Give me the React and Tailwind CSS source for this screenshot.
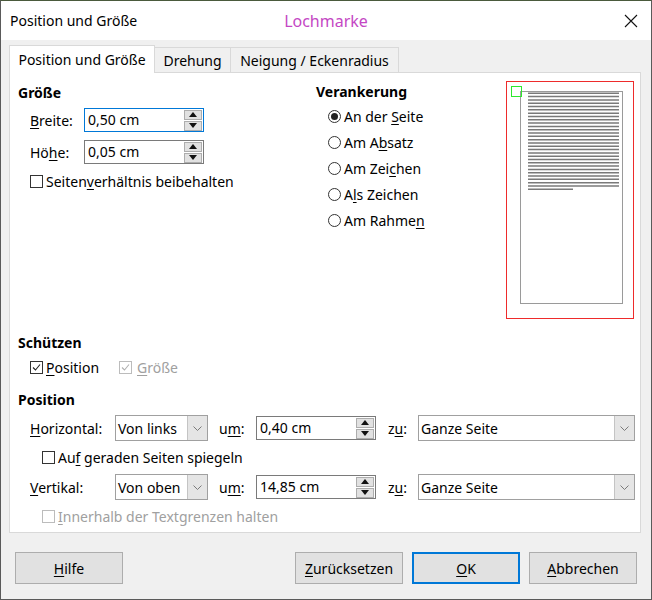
import React from "react";

const U = ({ children }) => <span className="underline underline-offset-2">{children}</span>;

const Checkbox = ({ checked, disabled }) => (
    <span className={`inline-flex w-[13px] h-[13px] border items-center justify-center bg-white ${disabled ? "border-[#bcbcbc]" : "border-[#333]"}`}>
        {checked && (
            <svg width="11" height="11" viewBox="0 0 11 11">
                <path d="M2 5.5 L4.5 8 L9 2.5" fill="none" stroke={disabled ? "#b0b0b0" : "#222"} strokeWidth="1.1" />
            </svg>
        )}
    </span>
);

const Radio = ({ checked }) => (
    <span className="inline-flex w-[13px] h-[13px] rounded-full border border-[#333] items-center justify-center bg-white">
        {checked && <span className="w-[7px] h-[7px] rounded-full bg-[#222]"></span>}
    </span>
);

const SpinField = ({ value, width, focused }) => (
    <div className={`flex items-center bg-white border h-[24px] ${width} ${focused ? "border-[#0078d7]" : "border-[#7a7a7a]"}`}>
        <span className="flex-1 pl-[3px] leading-none">{value}</span>
        <div className="flex flex-col gap-[1px] mr-[1px]">
            <span className="w-[18px] h-[10px] bg-[#e1e1e1] border border-[#adadad] flex items-center justify-center">
                <svg width="8" height="5" viewBox="0 0 8 5"><path d="M0 5 L4 0 L8 5 Z" fill="#111" /></svg>
            </span>
            <span className="w-[18px] h-[10px] bg-[#e1e1e1] border border-[#adadad] flex items-center justify-center">
                <svg width="8" height="5" viewBox="0 0 8 5"><path d="M0 0 L4 5 L8 0 Z" fill="#111" /></svg>
            </span>
        </div>
    </div>
);

const Select = ({ value, width }) => (
    <div className={`flex items-stretch bg-white border border-[#a0a0a0] h-[26px] ${width}`}>
        <span className="flex-1 pl-[2px] flex items-center">{value}</span>
        <span className="w-[20px] bg-[#e5e5e5] border-l border-[#c4c4c4] flex items-center justify-center">
            <svg width="9" height="5" viewBox="0 0 9 5"><path d="M0.5 0.5 L4.5 4.5 L8.5 0.5" fill="none" stroke="#7a7a7a" strokeWidth="1" /></svg>
        </span>
    </div>
);

const Preview = () => {
    const lines = Array.from({ length: 29 }, (_, i) => 12.3 + i * 3.31);
    return (
        <svg width="128" height="238" viewBox="0 0 128 238">
            <rect x="0.5" y="0.5" width="127" height="237" fill="white" stroke="#ee2b2b" strokeWidth="1" />
            <rect x="14.5" y="10.5" width="102" height="212" fill="white" stroke="#9a9a9a" strokeWidth="1" />
            {lines.map((y) => (
                <line key={y} x1="22" x2="113" y1={y} y2={y} stroke="#7a7a7a" strokeWidth="1.5" />
            ))}
            <line x1="22" x2="67" y1={108.3} y2={108.3} stroke="#7a7a7a" strokeWidth="1.5" />
            <rect x="5.5" y="5.5" width="10" height="10" fill="none" stroke="#2ee82e" strokeWidth="1" />
        </svg>
    );
};

const Button = ({ children, primary, width = "w-[108px]" }) => (
    <button className={`h-[32px] ${width} bg-[#e1e1e1] flex items-center justify-center ${primary ? "border-2 border-[#0078d7]" : "border border-[#adadad]"}`}>
        {children}
    </button>
);

export default function App() {
    return (
        <div className="w-[652px] h-[600px] flex flex-col bg-[#f0f0f0] border border-[#5a5a5a] border-t-[#4a5a3c] text-[14px] text-black overflow-hidden" style={{ fontFamily: '"Segoe UI", "Noto Sans", sans-serif' }}>
            {/* title bar */}
            <div className="h-[39px] bg-white grid grid-cols-[1fr_auto_1fr] items-center px-[9px] shrink-0">
                <span className="text-[14px]">Position und Größe</span>
                <span className="text-[16px] text-[#c447c4]">Lochmarke</span>
                <span className="justify-self-end mr-[4px]">
                    <svg width="14" height="14" viewBox="0 0 14 14"><path d="M1 1 L13 13 M13 1 L1 13" stroke="#111" strokeWidth="1.1" /></svg>
                </span>
            </div>

            <div className="px-[8px] pt-[5px] flex flex-col">
                {/* tabs */}
                <div className="flex items-end h-[28px] relative z-10">
                    <div className="h-[28px] w-[146px] bg-white border border-[#d9d9d9] border-b-0 flex items-center justify-center">Position und Größe</div>
                    <div className="h-[26px] w-[76px] border border-[#d9d9d9] border-l-0 flex items-center justify-center">Drehung</div>
                    <div className="h-[26px] w-[168px] border border-[#d9d9d9] border-l-0 flex items-center justify-center">Neigung / Eckenradius</div>
                </div>

                {/* panel */}
                <div className="w-[632px] h-[461px] -mt-[1px] bg-white border border-[#d9d9d9] flex flex-col">
                    <div className="flex h-[246px]">
                        <div className="w-[306px] pl-[8px] pt-[9px] flex flex-col">
                            <div className="h-[20px] flex items-center font-bold">Größe</div>
                            <div className="mt-[6px] flex items-center pl-[12px]">
                                <span className="w-[54px]"><U>B</U>reite:</span>
                                <SpinField value="0,50 cm" width="w-[120px]" focused />
                            </div>
                            <div className="mt-[8px] flex items-center pl-[12px]">
                                <span className="w-[54px]">Hö<U>h</U>e:</span>
                                <SpinField value="0,05 cm" width="w-[120px]" />
                            </div>
                            <div className="mt-[7px] h-[20px] flex items-center gap-[3px] pl-[12px]">
                                <Checkbox />
                                <span>Seiten<U>v</U>erhältnis beibehalten</span>
                            </div>
                        </div>
                        <div className="w-[190px] pt-[8px] flex flex-col">
                            <div className="h-[20px] flex items-center font-bold">Verankerung</div>
                            <div className="flex flex-col gap-[6px] pl-[12px] mt-[5px]">
                                <div className="h-[20px] flex items-center gap-[3px]"><Radio checked /><span>An der <U>S</U>eite</span></div>
                                <div className="h-[20px] flex items-center gap-[3px]"><Radio /><span>Am A<U>b</U>satz</span></div>
                                <div className="h-[20px] flex items-center gap-[3px]"><Radio /><span>Am Zei<U>c</U>hen</span></div>
                                <div className="h-[20px] flex items-center gap-[3px]"><Radio /><span>A<U>l</U>s Zeichen</span></div>
                                <div className="h-[20px] flex items-center gap-[3px]"><Radio /><span>Am Rahme<U>n</U></span></div>
                            </div>
                        </div>
                        <div className="pt-[8px] ml-auto mr-[6px]">
                            <Preview />
                        </div>
                    </div>

                    <div className="pl-[8px] pt-[13px] flex flex-col">
                        <div className="h-[20px] flex items-center font-bold">Schützen</div>
                        <div className="mt-[5px] h-[20px] flex items-center pl-[12px]">
                            <Checkbox checked />
                            <span className="ml-[3px] w-[73px]"><U>P</U>osition</span>
                            <Checkbox checked disabled />
                            <span className="ml-[5px] text-[#a0a0a0]"><U>G</U>röße</span>
                        </div>
                        <div className="mt-[12px] h-[20px] flex items-center font-bold">Position</div>
                        <div className="mt-[6px] flex items-center pl-[12px]">
                            <span className="w-[85px]"><U>H</U>orizontal:</span>
                            <Select value="Von links" width="w-[93px]" />
                            <span className="ml-[11px] w-[37px]">u<U>m</U>:</span>
                            <SpinField value="0,40 cm" width="w-[120px]" />
                            <span className="ml-[12px] w-[30px]">z<U>u</U>:</span>
                            <Select value="Ganze Seite" width="w-[217px]" />
                        </div>
                        <div className="mt-[6px] h-[20px] flex items-center gap-[3px] pl-[24px]">
                            <Checkbox />
                            <span>Au<U>f</U> geraden Seiten spiegeln</span>
                        </div>
                        <div className="mt-[7px] flex items-center pl-[12px]">
                            <span className="w-[85px]"><U>V</U>ertikal:</span>
                            <Select value="Von oben" width="w-[93px]" />
                            <span className="ml-[11px] w-[37px]">u<U>m</U>:</span>
                            <SpinField value="14,85 cm" width="w-[120px]" />
                            <span className="ml-[12px] w-[30px]">z<U>u</U>:</span>
                            <Select value="Ganze Seite" width="w-[217px]" />
                        </div>
                        <div className="mt-[6px] h-[20px] flex items-center gap-[3px] pl-[24px] text-[#a0a0a0]">
                            <Checkbox disabled />
                            <span><U>I</U>nnerhalb der Textgrenzen halten</span>
                        </div>
                    </div>
                </div>

                {/* buttons */}
                <div className="mt-[19px] flex items-center pl-[6px] pr-[6px]">
                    <Button><U>H</U>ilfe</Button>
                    <div className="ml-auto flex gap-[9px]">
                        <Button><U>Z</U>urücksetzen</Button>
                        <Button primary><U>O</U>K</Button>
                        <Button><U>A</U>bbrechen</Button>
                    </div>
                </div>
            </div>
        </div>
    );
}
